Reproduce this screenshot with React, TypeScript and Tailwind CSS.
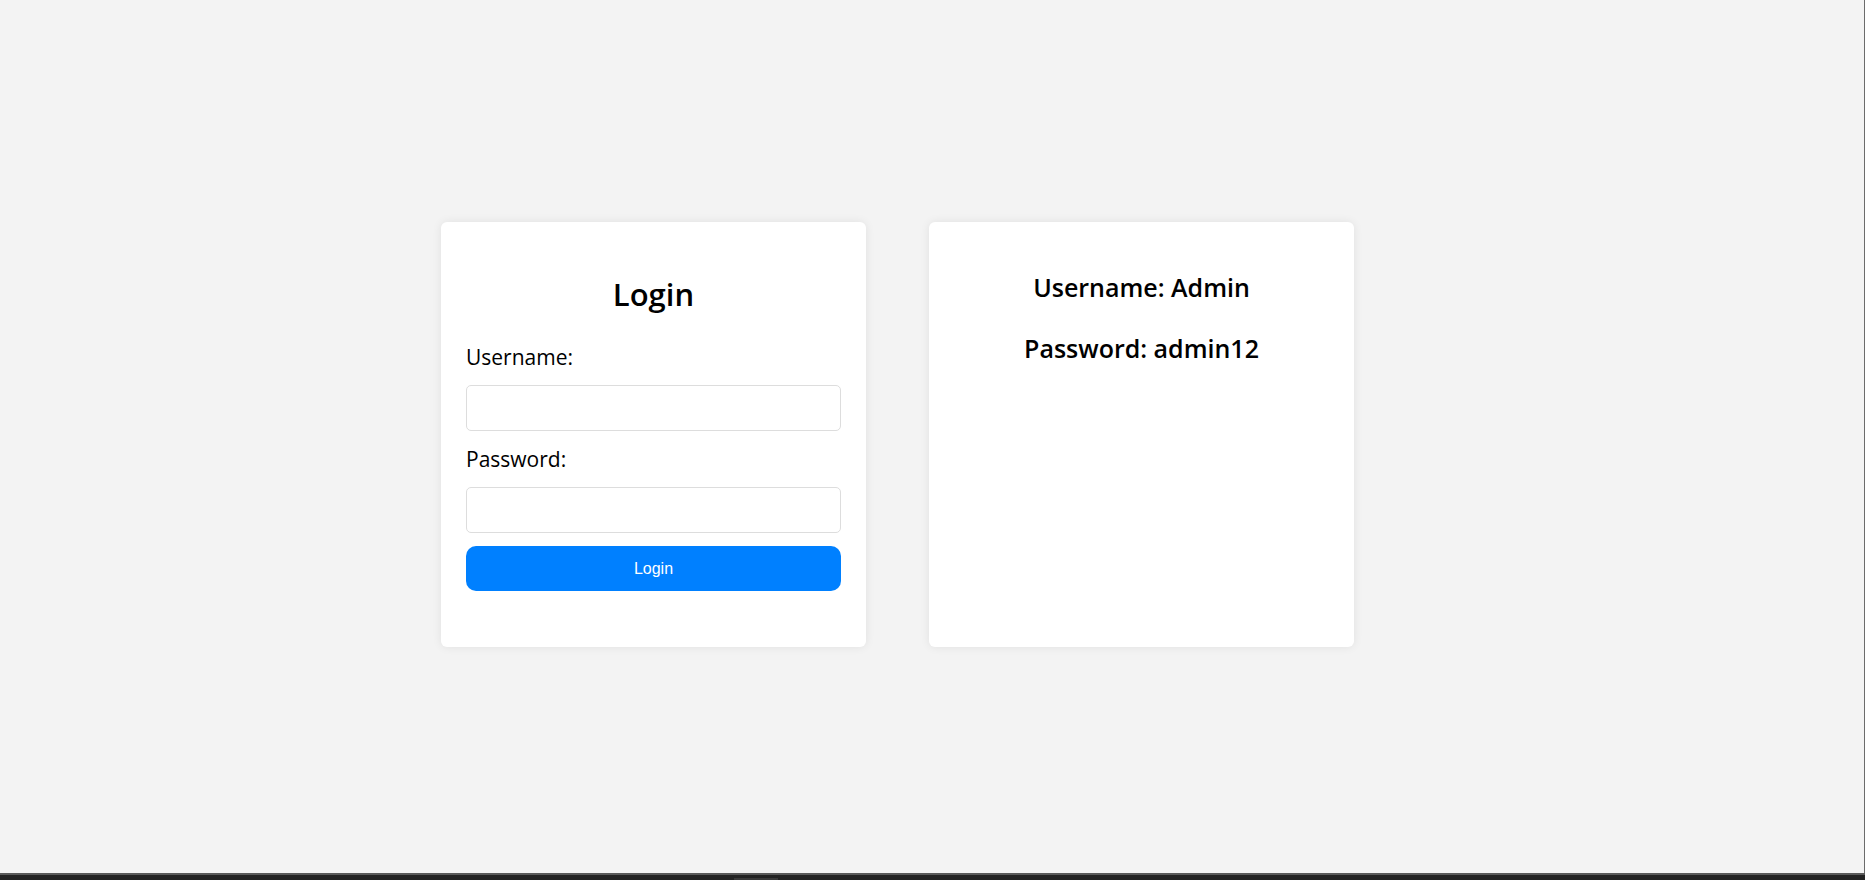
import React from "react";

export default function App() {
  return (
    <div className="flex h-[880px] w-[1865px] flex-col overflow-hidden bg-[#f3f3f3] font-['Open_Sans',sans-serif] text-black">
      <div className="flex h-[873px] w-full">
        <div className="flex flex-1 items-center pb-[4px] pl-[441px]">
          <div className="flex gap-[63px]">
            <div className="flex h-[425px] w-[425px] flex-col rounded-[6px] bg-white px-[25px] pt-[52px] shadow-[0_0_10px_rgba(0,0,0,0.08)]">
              <h2 className="text-center text-[31px] font-semibold leading-[40px]">Login</h2>
              <label className="mt-[31px] text-[21px] leading-[24px]">Username:</label>
              <input className="mt-[16px] h-[46px] w-full rounded-[5px] border border-[#dddddd] outline-none" />
              <label className="mt-[16px] text-[21px] leading-[24px]">Password:</label>
              <input type="password" className="mt-[16px] h-[46px] w-full rounded-[5px] border border-[#dddddd] outline-none" />
              <button className="mt-[13px] h-[45px] w-full rounded-[10px] bg-[#0080ff] font-['Liberation_Sans',sans-serif] text-[16px] text-white">
                Login
              </button>
            </div>
            <div className="flex h-[425px] w-[425px] flex-col items-center rounded-[6px] bg-white pt-[48px] shadow-[0_0_10px_rgba(0,0,0,0.08)]">
              <h3 className="text-[25px] font-semibold leading-[34px]">Username: Admin</h3>
              <h3 className="mt-[27px] text-[25px] font-semibold leading-[34px]">Password: admin12</h3>
            </div>
          </div>
        </div>
        <div className="w-px bg-[#6b6b6b]" />
      </div>
      <div className="flex h-[7px] flex-col border-t-2 border-[#5a5a5a] bg-[#232323]">
        <div className="mt-auto ml-[734px] h-[2px] w-[44px] bg-[#3a3a3a]" />
      </div>
    </div>
  );
}
